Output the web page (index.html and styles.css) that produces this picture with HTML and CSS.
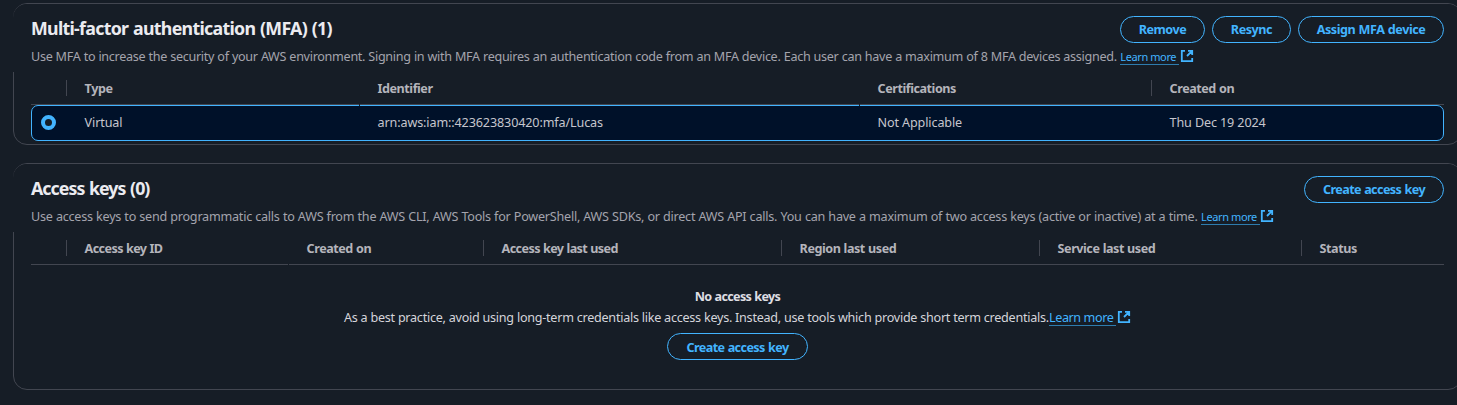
FILE: index.html
```html
<!DOCTYPE html>
<html lang="en">
<head>
<meta charset="utf-8">
<title>Security credentials</title>
<link rel="stylesheet" href="styles.css">
</head>
<body>
<svg class="sprite" width="0" height="0"><symbol id="ext" viewBox="0 0 14 14"><path d="M5 1.8H1.8v10.4h10.4V9M8 1.8h4.2V6M12.2 1.8 7 7" fill="none" stroke="currentColor" stroke-width="1.8"/></symbol></svg>
<main class="page">
  <section class="card card-mfa">
    <header class="card-header">
      <div class="title-row">
        <h2 class="title title-mfa">Multi-factor authentication (MFA) (1)</h2>
        <div class="actions">
          <button class="btn btn-remove">Remove</button>
          <button class="btn btn-resync">Resync</button>
          <button class="btn btn-assign">Assign MFA device</button>
        </div>
      </div>
      <p class="desc"><span class="desc-text desc-mfa">Use MFA to increase the security of your AWS environment. Signing in with MFA requires an authentication code from an MFA device. Each user can have a maximum of 8 MFA devices assigned.</span><a class="link small">Learn more</a><svg class="ext"><use href="#ext"/></svg></p>
    </header>
    <div class="table">
      <div class="row head mfa-cols">
        <div class="cell divided"></div><div class="cell notch">Type</div><div class="cell notch">Identifier</div><div class="cell divided">Certifications</div><div class="cell">Created on</div>
      </div>
      <div class="row selected mfa-cols">
        <div class="cell pick"><span class="radio"></span></div><div class="cell">Virtual</div><div class="cell">arn:aws:iam::423623830420:mfa/Lucas</div><div class="cell">Not Applicable</div><div class="cell">Thu Dec 19 2024</div>
      </div>
    </div>
  </section>
  <section class="card card-keys">
    <header class="card-header">
      <div class="title-row">
        <h2 class="title title-keys">Access keys (0)</h2>
        <div class="actions"><button class="btn btn-create">Create access key</button></div>
      </div>
      <p class="desc"><span class="desc-text desc-keys">Use access keys to send programmatic calls to AWS from the AWS CLI, AWS Tools for PowerShell, AWS SDKs, or direct AWS API calls. You can have a maximum of two access keys (active or inactive) at a time.</span><a class="link small">Learn more</a><svg class="ext"><use href="#ext"/></svg></p>
    </header>
    <div class="table">
      <div class="row head key-cols">
        <div class="cell divided"></div><div class="cell notch tight">Access key ID</div><div class="cell divided">Created on</div><div class="cell divided tight">Access key last used</div><div class="cell divided">Region last used</div><div class="cell divided">Service last used</div><div class="cell">Status</div>
      </div>
    </div>
    <div class="empty">
      <strong class="empty-title">No access keys</strong>
      <p class="empty-text"><span>As a best practice, avoid using long-term credentials like access keys. Instead, use tools which provide short term credentials.</span><a class="link">Learn more</a><svg class="ext"><use href="#ext"/></svg></p>
      <button class="btn btn-create btn-empty">Create access key</button>
    </div>
  </section>
</main>
</body>
</html>
```
FILE: styles.css
```css
* { box-sizing: border-box; }
body {
  margin: 0;
  height: 405px;
  overflow: hidden;
  background: #161d26;
  color: #c6c6cd;
  font: 12.6px/18px "Noto Sans", sans-serif;
  white-space: nowrap;
}
.sprite { display: none; }
.page { width: 1462px; padding: 3px 0 0 13px; display: flex; flex-direction: column; gap: 18px; }
.card { border: 1px solid #424650; border-radius: 14px; }
.card-mfa { height: 142px; }
.card-keys { height: 227px; }
.card-header { height: 68px; margin-left: -1px; padding: 12px 17px 0 18px; background: #161d26; border-top-left-radius: 14px; border-top-right-radius: 13px; }
.title-row { display: flex; justify-content: space-between; height: 27px; }
.title { margin: 0; font-size: 17.8px; line-height: 24px; font-weight: 670; color: #ebebf0; word-spacing: 0.8px; }
.title-mfa { letter-spacing: -0.71px; }
.title-keys { letter-spacing: -0.94px; }
.actions { display: flex; gap: 7px; }
.btn {
  height: 27px; padding: 0; border: 1px solid #42b4ff; border-radius: 14px;
  background: transparent; color: #42b4ff;
  font: 670 12.6px/24px "Noto Sans", sans-serif;
  letter-spacing: -0.45px;
  word-spacing: 0.5px;
}
.btn-remove { width: 85px; }
.btn-resync { width: 79px; }
.btn-assign { width: 146px; letter-spacing: -0.45px; }
.btn-create { width: 140px; letter-spacing: -0.59px; }
.btn-empty { width: 141px; padding-top: 2px; }
.desc { margin: 5px 0 0; display: flex; color: #a4a4ad; }
.desc-text { margin-right: 3.5px; }
.desc-mfa { letter-spacing: -0.3px; word-spacing: 0.2px; }
.desc-keys { letter-spacing: -0.235px; word-spacing: 0.2px; }
.link { color: #42b4ff; height: 17px; padding-right: 3px; border-bottom: 1px solid #2e7cae; letter-spacing: -0.4px; }
.small { font-size: 11px; }
.ext { width: 14px; height: 14px; margin: 1px 0 0 0.5px; color: #42b4ff; }
.table { margin: 0 17px; }
.row { display: grid; }
.mfa-cols { grid-template-columns: 36px 293px 500px 292px 1fr; }
.key-cols { grid-template-columns: 36px 222px 195px 298px 258px 262px 1fr; }
.cell { padding-left: 17.6px; }
.head { height: 33px; border-bottom: 1px solid #424650; font-weight: 670; color: #b4b4bb; letter-spacing: -0.46px; word-spacing: 0.4px; }
.head .cell { position: relative; padding-top: 8px; line-height: 18px; }
.head .tight { letter-spacing: -0.6px; }
.divided::after { content: ""; position: absolute; right: 0; top: 8px; width: 1px; height: 16px; background: #424650; }
.notch::after { content: ""; position: absolute; z-index: 1; right: 0; bottom: -2px; width: 1px; height: 2px; background: #161d26; }
.selected { height: 36px; border: 1px solid #42b4ff; border-radius: 7px; background: #001129; line-height: 34px; letter-spacing: -0.13px; }
.selected .cell { padding-left: 16.6px; }
.selected .pick { padding: 9px 0 0 9px; line-height: 0; }
.radio { display: inline-block; width: 15px; height: 15px; border: 4px solid #42b4ff; border-radius: 50%; background: #161d26; }
.empty { display: flex; flex-direction: column; align-items: center; padding-top: 23px; }
.empty-title { color: #dedee3; font-weight: 670; letter-spacing: -0.66px; word-spacing: 0.4px; }
.empty-text { display: flex; margin: 3px 0 6px; color: #d5d5db; letter-spacing: -0.255px; }
```
